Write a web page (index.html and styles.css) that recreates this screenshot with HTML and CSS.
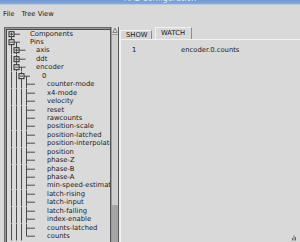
FILE: index.html
```html
<!DOCTYPE html>
<html>
<head>
<meta charset="utf-8">
<link rel="stylesheet" href="styles.css">
</head>
<body>
<div class="window">
  <div class="titlebar"><span class="title">HAL Configuration</span></div>
  <div class="menubar"><span class="menu">File</span><span class="menu">Tree View</span></div>
  <div class="main">
    <div class="tree">
      <div class="row l0"><svg viewBox="6 0 24 8.45"><path d="M11.5 4.2V8.45M14 4.2H20"/><rect x="9" y="1.7" width="5" height="5"/><path d="M10 4.2H13M11.5 2.7V5.7"/></svg><span>Components</span></div>
      <div class="row l0"><svg viewBox="6 0 24 8.45"><path d="M11.5 0V8.45M14 4.2H20M16.5 4.2V8.45"/><rect x="9" y="1.7" width="5" height="5"/><path d="M10 4.2H13"/></svg><span>Pins</span></div>
      <div class="row l1"><svg viewBox="6 0 30 8.45"><path d="M11.5 0V8.45M16.5 0V8.45M19 4.2H25.5"/><rect x="14" y="1.7" width="5" height="5"/><path d="M15 4.2H18M16.5 2.7V5.7"/></svg><span>axis</span></div>
      <div class="row l1"><svg viewBox="6 0 30 8.45"><path d="M11.5 0V8.45M16.5 0V8.45M19 4.2H25.5"/><rect x="14" y="1.7" width="5" height="5"/><path d="M15 4.2H18M16.5 2.7V5.7"/></svg><span>ddt</span></div>
      <div class="row l1"><svg viewBox="6 0 30 8.45"><path d="M11.5 0V8.45M16.5 0V8.45M19 4.2H25.5M21.5 4.2V8.45"/><rect x="14" y="1.7" width="5" height="5"/><path d="M15 4.2H18"/></svg><span>encoder</span></div>
      <div class="row l2"><svg viewBox="6 0 36 8.45"><path d="M11.5 0V8.45M16.5 0V8.45M21.5 0V8.45M24 4.2H30M26.5 4.2V8.45"/><rect x="19" y="1.7" width="5" height="5"/><path d="M20 4.2H23"/></svg><span>0</span></div>
      <div class="row l3"><svg viewBox="6 0 41 8.45"><path d="M11.5 0V8.45M16.5 0V8.45M21.5 0V8.45M26.5 0V8.45M26.5 4.2H35"/></svg><span>counter-mode</span></div>
      <div class="row l3"><svg viewBox="6 0 41 8.45"><path d="M11.5 0V8.45M16.5 0V8.45M21.5 0V8.45M26.5 0V8.45M26.5 4.2H35"/></svg><span>x4-mode</span></div>
      <div class="row l3"><svg viewBox="6 0 41 8.45"><path d="M11.5 0V8.45M16.5 0V8.45M21.5 0V8.45M26.5 0V8.45M26.5 4.2H35"/></svg><span>velocity</span></div>
      <div class="row l3"><svg viewBox="6 0 41 8.45"><path d="M11.5 0V8.45M16.5 0V8.45M21.5 0V8.45M26.5 0V8.45M26.5 4.2H35"/></svg><span>reset</span></div>
      <div class="row l3"><svg viewBox="6 0 41 8.45"><path d="M11.5 0V8.45M16.5 0V8.45M21.5 0V8.45M26.5 0V8.45M26.5 4.2H35"/></svg><span>rawcounts</span></div>
      <div class="row l3"><svg viewBox="6 0 41 8.45"><path d="M11.5 0V8.45M16.5 0V8.45M21.5 0V8.45M26.5 0V8.45M26.5 4.2H35"/></svg><span>position-scale</span></div>
      <div class="row l3"><svg viewBox="6 0 41 8.45"><path d="M11.5 0V8.45M16.5 0V8.45M21.5 0V8.45M26.5 0V8.45M26.5 4.2H35"/></svg><span>position-latched</span></div>
      <div class="row l3"><svg viewBox="6 0 41 8.45"><path d="M11.5 0V8.45M16.5 0V8.45M21.5 0V8.45M26.5 0V8.45M26.5 4.2H35"/></svg><span>position-interpolated</span></div>
      <div class="row l3"><svg viewBox="6 0 41 8.45"><path d="M11.5 0V8.45M16.5 0V8.45M21.5 0V8.45M26.5 0V8.45M26.5 4.2H35"/></svg><span>position</span></div>
      <div class="row l3"><svg viewBox="6 0 41 8.45"><path d="M11.5 0V8.45M16.5 0V8.45M21.5 0V8.45M26.5 0V8.45M26.5 4.2H35"/></svg><span>phase-Z</span></div>
      <div class="row l3"><svg viewBox="6 0 41 8.45"><path d="M11.5 0V8.45M16.5 0V8.45M21.5 0V8.45M26.5 0V8.45M26.5 4.2H35"/></svg><span>phase-B</span></div>
      <div class="row l3"><svg viewBox="6 0 41 8.45"><path d="M11.5 0V8.45M16.5 0V8.45M21.5 0V8.45M26.5 0V8.45M26.5 4.2H35"/></svg><span>phase-A</span></div>
      <div class="row l3"><svg viewBox="6 0 41 8.45"><path d="M11.5 0V8.45M16.5 0V8.45M21.5 0V8.45M26.5 0V8.45M26.5 4.2H35"/></svg><span>min-speed-estimate</span></div>
      <div class="row l3"><svg viewBox="6 0 41 8.45"><path d="M11.5 0V8.45M16.5 0V8.45M21.5 0V8.45M26.5 0V8.45M26.5 4.2H35"/></svg><span>latch-rising</span></div>
      <div class="row l3"><svg viewBox="6 0 41 8.45"><path d="M11.5 0V8.45M16.5 0V8.45M21.5 0V8.45M26.5 0V8.45M26.5 4.2H35"/></svg><span>latch-input</span></div>
      <div class="row l3"><svg viewBox="6 0 41 8.45"><path d="M11.5 0V8.45M16.5 0V8.45M21.5 0V8.45M26.5 0V8.45M26.5 4.2H35"/></svg><span>latch-falling</span></div>
      <div class="row l3"><svg viewBox="6 0 41 8.45"><path d="M11.5 0V8.45M16.5 0V8.45M21.5 0V8.45M26.5 0V8.45M26.5 4.2H35"/></svg><span>index-enable</span></div>
      <div class="row l3"><svg viewBox="6 0 41 8.45"><path d="M11.5 0V8.45M16.5 0V8.45M21.5 0V8.45M26.5 0V8.45M26.5 4.2H35"/></svg><span>counts-latched</span></div>
      <div class="row l3"><svg viewBox="6 0 41 8.45"><path d="M11.5 0V8.45M16.5 0V8.45M21.5 0V8.45M26.5 0V4.2M26.5 4.2H35"/></svg><span>counts</span></div>
    </div>
    <div class="scrollbar">
      <div class="arrow"><svg viewBox="0 0 6 7"><path d="M0.8 5.5L3 1L5.2 5.5Z"/></svg></div>
      <div class="trough"></div>
      <div class="thumb"></div>
    </div>
    <div class="sash"></div>
    <div class="notebook">
      <div class="tabs">
        <div class="tab">SHOW</div>
        <div class="tab selected">WATCH</div>
      </div>
      <div class="pane">
        <div class="watchrow"><span class="num">1</span><span class="pin">encoder.0.counts</span></div>
      </div>
    </div>
  </div>
  <div class="grip"><svg viewBox="0 0 8 6"><path d="M5 0.5V5.5M6.5 2V5.5M3.5 3V5.5"/></svg></div>
</div>
</body>
</html>
```
FILE: styles.css
```css
html, body {
  margin: 0;
  padding: 0;
}
body {
  width: 300px;
  height: 242px;
  overflow: hidden;
  background: #d9d9d9;
  font-family: "DejaVu Sans", sans-serif;
  font-size: 6.8px;
  color: #1b1b1b;
}
.window {
  position: relative;
  width: 300px;
  height: 242px;
  overflow: hidden;
  display: flex;
  flex-direction: column;
}
.titlebar {
  height: 4px;
  background: linear-gradient(#6f98cf, #86a9da);
  overflow: hidden;
  display: flex;
  justify-content: center;
  border-bottom: 1px solid #b9c9de;
}
.title {
  font-size: 8px;
  line-height: 8px;
  margin-top: -5px;
  margin-left: 20px;
  color: #dfe8f4;
}
.menubar {
  height: 17px;
  display: flex;
  align-items: center;
  gap: 7px;
  padding-left: 3px;
  padding-top: 1px;
  box-sizing: border-box;
}
.main {
  flex: 1;
  display: flex;
  margin-top: 5px;
  min-height: 0;
}
.tree {
  margin-left: 4px;
  width: 107px;
  box-sizing: border-box;
  border: 1px solid #6a6a6a;
  border-right: 1px solid #555;
  border-bottom: none;
  box-shadow: inset 1px 1px 0 #9a9a9a, inset 2px 2px 0 #4a4a4a;
  padding-top: 1.6px;
  padding-left: 1px;
  overflow: hidden;
  background: #dadada;
}
.row {
  height: 8.45px;
  display: flex;
  align-items: center;
  white-space: nowrap;
}
.row svg {
  height: 8.45px;
  flex: none;
  fill: #dadada;
  stroke: #4a4a4a;
  stroke-width: 1;
}
.row svg rect {
  stroke: #2a2a2a;
}
.l0 svg { width: 24px; }
.l1 svg { width: 30px; }
.l2 svg { width: 36px; }
.l3 svg { width: 41px; }
.row span {
  line-height: 8.45px;
}
.scrollbar {
  width: 6px;
  display: flex;
  flex-direction: column;
  background: #cfcfcf;
  border-left: 1px solid #9b9b9b;
}
.arrow {
  height: 7px;
  background: #dcdcdc;
  border-bottom: 1px solid #a0a0a0;
}
.arrow svg {
  display: block;
  width: 6px;
  height: 7px;
  fill: none;
  stroke: #6c6c6c;
  stroke-width: 0.8;
}
.trough {
  flex: 1;
}
.thumb {
  height: 37px;
  background: #a6a6a6;
}
.sash {
  width: 1px;
  background: #5a5a5a;
  border-right: 1px solid #ececec;
}
.notebook {
  flex: 1;
  display: flex;
  flex-direction: column;
}
.tabs {
  height: 12px;
  display: flex;
  align-items: flex-end;
}
.tab {
  height: 8.5px;
  line-height: 8.5px;
  padding: 0 3.5px 0 5px;
  border: 1px solid #f2f2f2;
  border-right-color: #8c8c8c;
  border-bottom: none;
  background: #d4d4d4;
}
.tab.selected {
  height: 11px;
  line-height: 10px;
  margin-left: 3px;
  padding: 0 6px 0 5px;
  background: #d9d9d9;
}
.pane {
  flex: 1;
  border-top: 1px solid #f2f2f2;
  border-left: 1px solid #f2f2f2;
  padding-top: 6px;
}
.watchrow {
  display: flex;
  line-height: 8px;
}
.num {
  width: 49px;
  padding-left: 11px;
  box-sizing: content-box;
}
.grip {
  position: absolute;
  right: 3px;
  bottom: 1px;
  width: 8px;
  height: 6px;
}
.grip svg {
  display: block;
  width: 8px;
  height: 6px;
  stroke: #6a6a6a;
  stroke-width: 1;
}
```
